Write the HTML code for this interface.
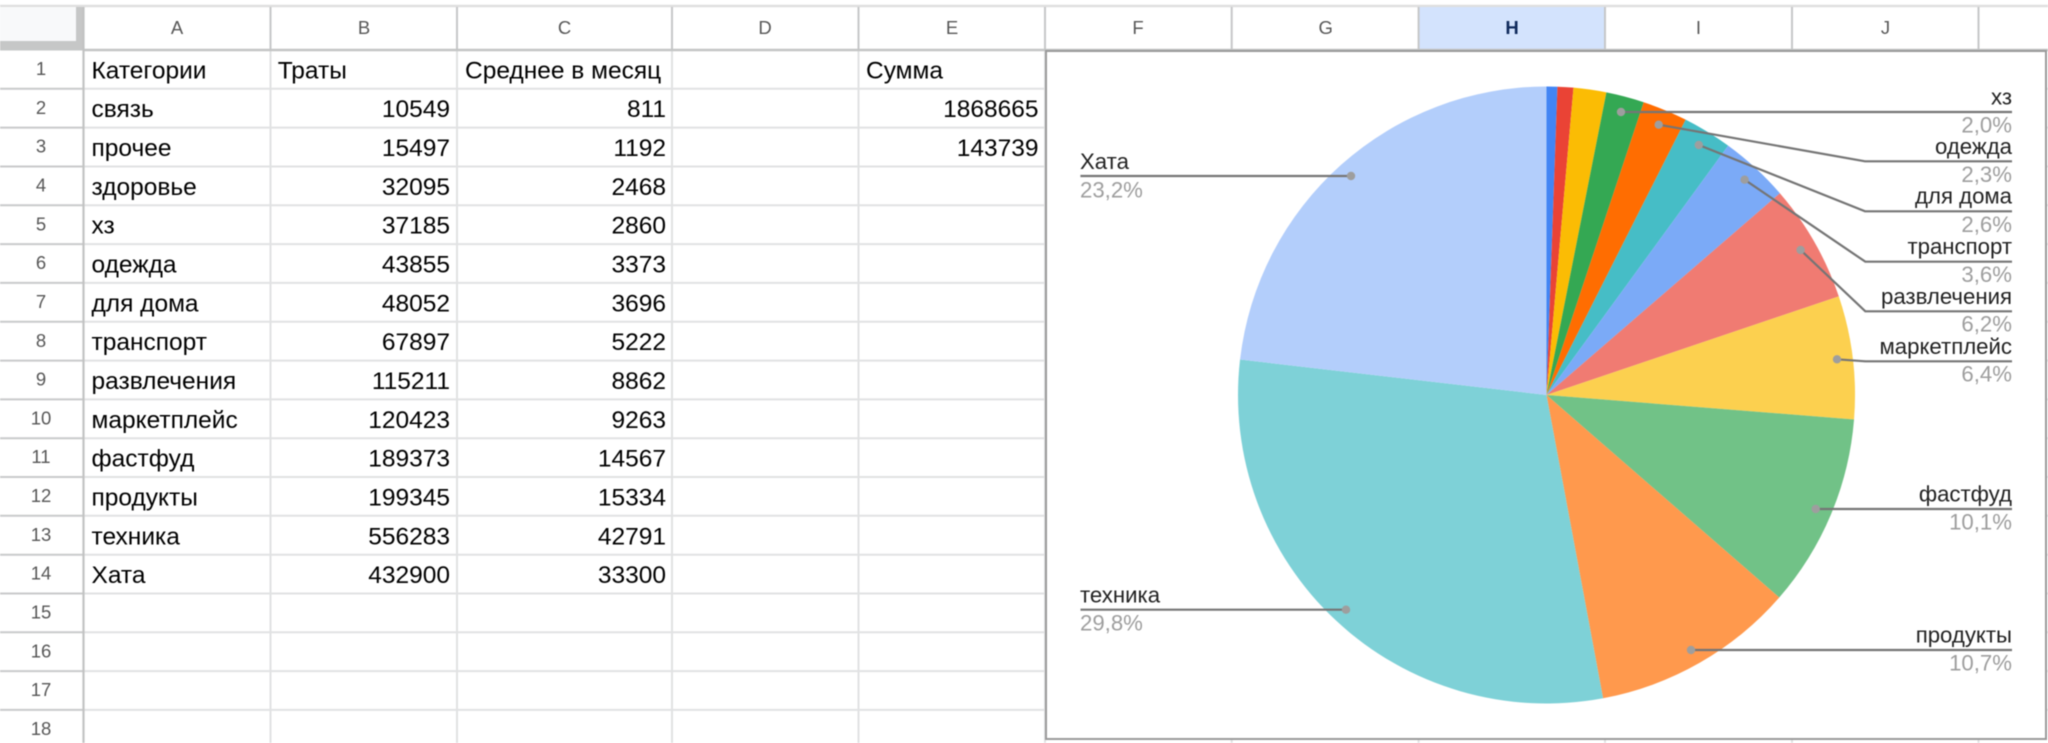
<!DOCTYPE html>
<html><head><meta charset="utf-8"><title>Таблица</title>
<style>
html,body{margin:0;padding:0;background:#fff;width:2048px;height:743px;overflow:hidden}
svg{display:block;font-family:"Liberation Sans",Arial,sans-serif;filter:blur(.4px)}
.c{font-size:24.5px;fill:#000}
.r{text-anchor:end}
.h{font-size:18.5px;fill:#575757;text-anchor:middle}
.l{font-size:22.2px;fill:#222;text-anchor:end}
.p{font-size:22.2px;fill:#9e9e9e;text-anchor:end}
.ll{font-size:22.2px;fill:#222}
.lp{font-size:22.2px;fill:#9e9e9e}
.g{stroke:#e1e2e3;stroke-width:2;fill:none}
.d{stroke:#c6c7c8;stroke-width:2;fill:none}
.k{stroke:#757575;stroke-width:2.2;fill:none}
.o{fill:#9e9e9e}
</style></head><body>
<svg xmlns="http://www.w3.org/2000/svg" width="2048" height="743" viewBox="0 0 2048 743">
<rect width="2048" height="743" fill="#fff"/>
<!-- top line -->
<path d="M0 6H2048" stroke="#dfdfdf" stroke-width="2.4"/>
<!-- corner -->
<rect x="0" y="7" width="76" height="34" fill="#f8f9fa"/>
<rect x="0" y="41" width="84" height="9.5" fill="#c6c7c7"/>
<rect x="76" y="7" width="8" height="43" fill="#c6c7c7"/>
<!-- cell grid horizontal -->
<path class="g" d="M84 88.8H2048M84 127.6H2048M84 166.5H2048M84 205.3H2048M84 244.1H2048M84 282.9H2048M84 321.7H2048M84 360.6H2048M84 399.4H2048M84 438.2H2048M84 477H2048M84 515.8H2048M84 554.7H2048M84 593.5H2048M84 632.3H2048M84 671.1H2048M84 709.9H2048"/>
<!-- cell grid vertical -->
<path class="g" d="M270.5 50V743M457 50V743M672 50V743M858.5 50V743M1045 50V743M1231.7 50V743M1418.6 50V743M1605 50V743M1792 50V743M1978.5 50V743"/>
<!-- H header highlight -->
<rect x="1419" y="7" width="186" height="43" fill="#d3e3fd"/>
<!-- header lines -->
<path class="d" d="M270.5 7V50M457 7V50M672 7V50M858.5 7V50M1045 7V50M1231.7 7V50M1418.6 7V50M1605 7V50M1792 7V50M1978.5 7V50"/>
<path d="M84 50H2048" stroke="#c4c5c5" stroke-width="2.4"/>
<path d="M0 88.8H84M0 127.6H84M0 166.5H84M0 205.3H84M0 244.1H84M0 282.9H84M0 321.7H84M0 360.6H84M0 399.4H84M0 438.2H84M0 477H84M0 515.8H84M0 554.7H84M0 593.5H84M0 632.3H84M0 671.1H84M0 709.9H84" stroke="#c9cacb" stroke-width="2" fill="none"/>
<path d="M83.5 7V743" stroke="#c2c3c3" stroke-width="2.2"/>
<!-- column headers -->
<text class="h" x="177" y="34">A</text><text class="h" x="364" y="34">B</text><text class="h" x="564.5" y="34">C</text><text class="h" x="765" y="34">D</text><text class="h" x="952" y="34">E</text><text class="h" x="1138" y="34">F</text><text class="h" x="1325.7" y="34">G</text><text class="h" x="1512" y="34" style="fill:#0f2a5c;font-weight:bold">H</text><text class="h" x="1698.5" y="34">I</text><text class="h" x="1885.5" y="34">J</text>
<!-- row headers -->
<g>
<text class="h" x="41" y="75">1</text><text class="h" x="41" y="113.8">2</text><text class="h" x="41" y="152.6">3</text><text class="h" x="41" y="191.5">4</text><text class="h" x="41" y="230.3">5</text><text class="h" x="41" y="269.1">6</text><text class="h" x="41" y="307.9">7</text><text class="h" x="41" y="346.8">8</text><text class="h" x="41" y="385.6">9</text><text class="h" x="41" y="424.4">10</text><text class="h" x="41" y="463.2">11</text><text class="h" x="41" y="502">12</text><text class="h" x="41" y="540.9">13</text><text class="h" x="41" y="579.7">14</text><text class="h" x="41" y="618.5">15</text><text class="h" x="41" y="657.3">16</text><text class="h" x="41" y="696.1">17</text><text class="h" x="41" y="734.9">18</text>
</g>
<!-- column A -->
<text class="c" x="91.5" y="78.4">Категории</text><text class="c" x="91.5" y="117.2">связь</text><text class="c" x="91.5" y="156">прочее</text><text class="c" x="91.5" y="194.9">здоровье</text><text class="c" x="91.5" y="233.7">хз</text><text class="c" x="91.5" y="272.5">одежда</text><text class="c" x="91.5" y="311.3">для дома</text><text class="c" x="91.5" y="350.2">транспорт</text><text class="c" x="91.5" y="389">развлечения</text><text class="c" x="91.5" y="427.8">маркетплейс</text><text class="c" x="91.5" y="466.6">фастфуд</text><text class="c" x="91.5" y="505.4">продукты</text><text class="c" x="91.5" y="544.3">техника</text><text class="c" x="91.5" y="583.1">Хата</text>
<!-- column B -->
<text class="c" x="277.7" y="78.4">Траты</text>
<text class="c r" x="450" y="117.2">10549</text><text class="c r" x="450" y="156">15497</text><text class="c r" x="450" y="194.9">32095</text><text class="c r" x="450" y="233.7">37185</text><text class="c r" x="450" y="272.5">43855</text><text class="c r" x="450" y="311.3">48052</text><text class="c r" x="450" y="350.2">67897</text><text class="c r" x="450" y="389">115211</text><text class="c r" x="450" y="427.8">120423</text><text class="c r" x="450" y="466.6">189373</text><text class="c r" x="450" y="505.4">199345</text><text class="c r" x="450" y="544.3">556283</text><text class="c r" x="450" y="583.1">432900</text>
<!-- column C -->
<text class="c" x="465" y="78.4">Среднее в месяц</text>
<text class="c r" x="666" y="117.2">811</text><text class="c r" x="666" y="156">1192</text><text class="c r" x="666" y="194.9">2468</text><text class="c r" x="666" y="233.7">2860</text><text class="c r" x="666" y="272.5">3373</text><text class="c r" x="666" y="311.3">3696</text><text class="c r" x="666" y="350.2">5222</text><text class="c r" x="666" y="389">8862</text><text class="c r" x="666" y="427.8">9263</text><text class="c r" x="666" y="466.6">14567</text><text class="c r" x="666" y="505.4">15334</text><text class="c r" x="666" y="544.3">42791</text><text class="c r" x="666" y="583.1">33300</text>
<!-- column E -->
<text class="c" x="866" y="78.4">Сумма</text>
<text class="c r" x="1038.5" y="117.2">1868665</text><text class="c r" x="1038.5" y="156">143739</text>
<!-- chart -->
<rect x="1046" y="51" width="1000" height="688" fill="#fff" stroke="#9a9a9a" stroke-width="2"/>
<path d="M1546.5 395L1546.5 86.5A308.5 308.5 0 0 1 1557.44 86.69Z" fill="#4285f4"/>
<path d="M1546.5 395L1557.44 86.69A308.5 308.5 0 0 1 1573.48 87.68Z" fill="#ea4335"/>
<path d="M1546.5 395L1573.48 87.68A308.5 308.5 0 0 1 1606.42 92.38Z" fill="#fbbc04"/>
<path d="M1546.5 395L1606.42 92.38A308.5 308.5 0 0 1 1643.7 102.21Z" fill="#34a853"/>
<path d="M1546.5 395L1643.7 102.21A308.5 308.5 0 0 1 1685.66 119.67Z" fill="#ff6d01"/>
<path d="M1546.5 395L1685.66 119.67A308.5 308.5 0 0 1 1728.15 145.65Z" fill="#46bdc6"/>
<path d="M1546.5 395L1728.15 145.65A308.5 308.5 0 0 1 1779.87 193.24Z" fill="#7baaf7"/>
<path d="M1546.5 395L1779.87 193.24A308.5 308.5 0 0 1 1838.8 296.34Z" fill="#f07b72"/>
<path d="M1546.5 395L1838.8 296.34A308.5 308.5 0 0 1 1854.03 419.45Z" fill="#fcd04f"/>
<path d="M1546.5 395L1854.03 419.45A308.5 308.5 0 0 1 1779.27 597.47Z" fill="#71c287"/>
<path d="M1546.5 395L1779.27 597.47A308.5 308.5 0 0 1 1603.07 698.27Z" fill="#ff994d"/>
<path d="M1546.5 395L1603.07 698.27A308.5 308.5 0 0 1 1240.05 359.54Z" fill="#7ed1d7"/>
<path d="M1546.5 395L1240.05 359.54A308.5 308.5 0 0 1 1546.5 86.5Z" fill="#b3cefb"/>
<!-- leaders -->
<path class="k" d="M1080.4 176H1351M1621 112H2012M1658.7 124.7L1865 161.3H2012M1698.8 145L1865 211.3H2012M1744.6 179.7L1865.3 261.7H2012M1800.6 250L1865.3 311.3H2012M1837 359.3L1865.3 361.3H2012M1815.7 509H2012M1691 650H2012M1080.5 609.7H1346"/>
<circle class="o" cx="1351" cy="176" r="4.2"/><circle class="o" cx="1621" cy="112" r="4.2"/><circle class="o" cx="1658.7" cy="124.7" r="4.2"/><circle class="o" cx="1698.8" cy="145" r="4.2"/><circle class="o" cx="1744.6" cy="179.7" r="4.2"/><circle class="o" cx="1800.6" cy="250" r="4.2"/><circle class="o" cx="1837" cy="359.3" r="4.2"/><circle class="o" cx="1815.7" cy="509" r="4.2"/><circle class="o" cx="1691" cy="650" r="4.2"/><circle class="o" cx="1346" cy="609.7" r="4.2"/>
<!-- labels -->
<text class="ll" x="1080" y="169">Хата</text><text class="lp" x="1080" y="197.3">23,2%</text>
<text class="ll" x="1080" y="602.5">техника</text><text class="lp" x="1080" y="630.5">29,8%</text>
<text class="l" x="2012" y="104.3">хз</text><text class="p" x="2012" y="132.3">2,0%</text>
<text class="l" x="2012" y="154">одежда</text><text class="p" x="2012" y="182">2,3%</text>
<text class="l" x="2012" y="203.7">для дома</text><text class="p" x="2012" y="232">2,6%</text>
<text class="l" x="2012" y="254">транспорт</text><text class="p" x="2012" y="282">3,6%</text>
<text class="l" x="2012" y="304">развлечения</text><text class="p" x="2012" y="331.7">6,2%</text>
<text class="l" x="2012" y="354">маркетплейс</text><text class="p" x="2012" y="381.7">6,4%</text>
<text class="l" x="2012" y="501.5">фастфуд</text><text class="p" x="2012" y="529.5">10,1%</text>
<text class="l" x="2012" y="642.5">продукты</text><text class="p" x="2012" y="670.5">10,7%</text>
</svg>
</body></html>
